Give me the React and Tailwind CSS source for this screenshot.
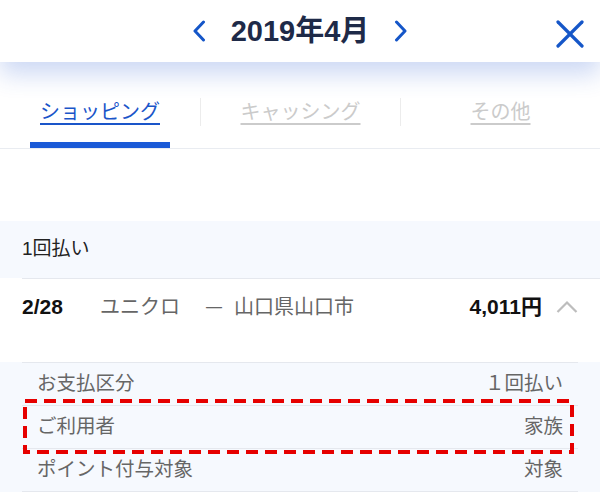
const FONT = { fontFamily: '"Liberation Sans", "Noto Sans CJK JP", sans-serif' };

const DETAILS = [
  { label: 'お支払区分', value: '１回払い' },
  { label: 'ご利用者', value: '家族' },
  { label: 'ポイント付与対象', value: '対象' },
];

const Chevron = ({ dir }) => (
  <svg width="14" height="22" viewBox="0 0 14 22" className="text-[#1556c8]">
    <polyline
      points={dir === 'left' ? '11.5,2 3,11 11.5,20' : '2.5,2 11,11 2.5,20'}
      fill="none" stroke="currentColor" strokeWidth="3" strokeLinecap="round" strokeLinejoin="round"
    />
  </svg>
);

const App = () => {
  return (
    <div className="w-[600px] h-[500px] overflow-hidden bg-white" style={FONT}>
      {/* Header */}
      <div className="relative z-10 h-[62px] bg-white flex items-center justify-center shadow-[0_12px_24px_rgba(40,90,210,0.24)]">
        <div className="flex items-center">
          <Chevron dir="left" />
          <span className="mx-[25px] text-[29px] font-bold text-[#1e2a48] leading-none">2019年4月</span>
          <Chevron dir="right" />
        </div>
        <svg width="28" height="28" viewBox="0 0 28 28" className="absolute left-[556px] top-[20px] text-[#1556c8]">
          <line x1="2" y1="2" x2="26" y2="26" stroke="currentColor" strokeWidth="3.2" strokeLinecap="round" />
          <line x1="26" y1="2" x2="2" y2="26" stroke="currentColor" strokeWidth="3.2" strokeLinecap="round" />
        </svg>
      </div>

      {/* Tabs */}
      <div className="h-[87px] border-b border-[#e9ecf1] flex pt-[36px]">
        <div className="w-[200px] flex flex-col items-center">
          <span className="text-[20px] leading-[28px] text-[#1a55c9] underline underline-offset-4">ショッピング</span>
          <div className="mt-[16px] w-[140px] h-[6px] bg-[#1a5ad7]" />
        </div>
        <div className="w-[200px] flex justify-center border-l border-[#ececec] h-[28px]">
          <span className="text-[20px] leading-[28px] text-[#cbcbcb] underline underline-offset-4">キャッシング</span>
        </div>
        <div className="w-[200px] flex justify-center border-l border-[#ececec] h-[28px]">
          <span className="text-[20px] leading-[28px] text-[#cbcbcb] underline underline-offset-4">その他</span>
        </div>
      </div>

      <div className="h-[72px]" />

      {/* Section header */}
      <div className="h-[57px] bg-[#f6f9fe] flex items-center pl-[22px]">
        <span className="text-[19px] text-[#222]">1回払い</span>
      </div>
      <div className="ml-[22px] border-t border-[#e5e8ee]" />

      {/* Item row */}
      <div className="h-[56px] flex items-center px-[22px]">
        <span className="text-[21px] font-bold text-[#111] w-[78px]">2/28</span>
        <span className="text-[20px] text-[#666]">ユニクロ</span>
        <span className="text-[16px] text-[#666] ml-[26px] mr-[12px]">—</span>
        <span className="text-[20px] text-[#666]">山口県山口市</span>
        <span className="ml-auto text-[21px] font-bold text-[#111]">4,011円</span>
        <svg width="22" height="14" viewBox="0 0 22 14" className="ml-[14px] text-[#bdbdbd]">
          <polyline points="1.5,12 11,2.5 20.5,12" fill="none" stroke="currentColor" strokeWidth="2.2" />
        </svg>
      </div>
      <div className="h-[27px]" />

      {/* Details */}
      <div className="relative bg-[#f6f9fe]">
        <div className="mx-[22px] border-t border-[#e5e8ee]" />
        {DETAILS.map(d => (
          <div key={d.label} className="mx-[22px] h-[43px] flex items-center justify-between px-[15px] border-b border-[#e5e8ee]">
            <span className="text-[19.5px] text-[#666]">{d.label}</span>
            <span className="text-[19.5px] text-[#666]">{d.value}</span>
          </div>
        ))}
        <svg className="absolute left-[23px] top-[37px]" width="551" height="55">
          <rect x="2" y="2" width="547" height="51" fill="none" stroke="#e60000" strokeWidth="4" strokeDasharray="12 7" />
        </svg>
      </div>
    </div>
  );
};

export default App;
